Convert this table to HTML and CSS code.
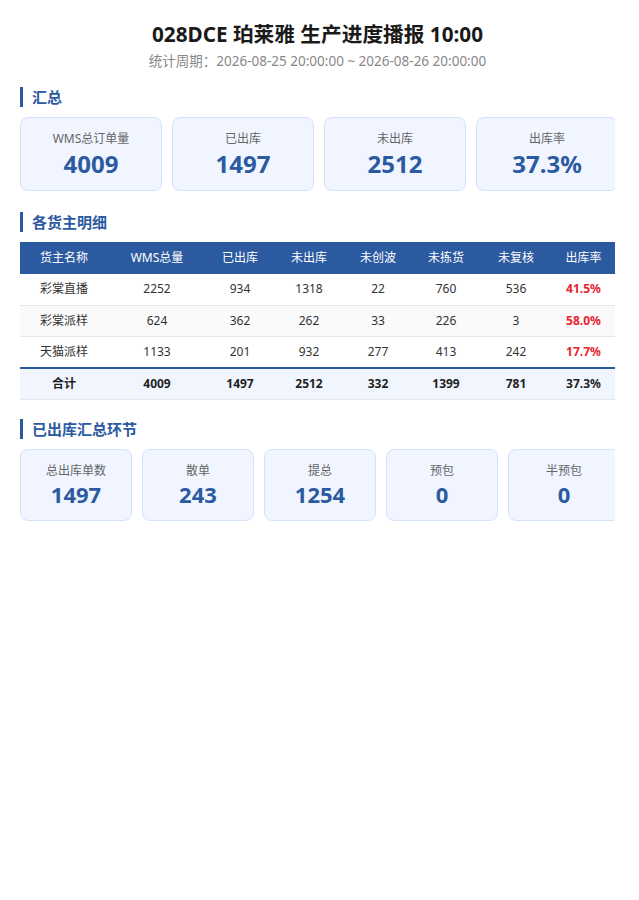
FILE: index.html
```html
<!DOCTYPE html>
<html lang="zh-CN">
<head>
<meta charset="utf-8">
<title>028DCE 珀莱雅 生产进度播报 10:00</title>
<link rel="stylesheet" href="styles.css">
</head>
<body>
<div class="page">
  <header class="head">
    <h1 class="title">028DCE 珀莱雅 生产进度播报 10:00</h1>
    <p class="period">统计周期：2026-08-25 20:00:00 ~ 2026-08-26 20:00:00</p>
  </header>

  <section class="section first">
    <h2 class="sec-title">汇总</h2>
    <div class="cards">
      <div class="card card-lg"><div class="label">WMS总订单量</div><div class="value">4009</div></div>
      <div class="card card-lg"><div class="label">已出库</div><div class="value">1497</div></div>
      <div class="card card-lg"><div class="label">未出库</div><div class="value">2512</div></div>
      <div class="card card-lg"><div class="label">出库率</div><div class="value">37.3%</div></div>
    </div>
  </section>

  <section class="section">
    <h2 class="sec-title">各货主明细</h2>
    <table class="detail">
      <colgroup>
        <col class="c1"><col class="c2"><col class="c3"><col class="c4"><col class="c5"><col class="c6"><col class="c7"><col class="c8">
      </colgroup>
      <thead>
        <tr><th>货主名称</th><th>WMS总量</th><th>已出库</th><th>未出库</th><th>未创波</th><th>未拣货</th><th>未复核</th><th>出库率</th></tr>
      </thead>
      <tbody>
        <tr><td>彩棠直播</td><td>2252</td><td>934</td><td>1318</td><td>22</td><td>760</td><td>536</td><td class="rate">41.5%</td></tr>
        <tr class="alt"><td>彩棠派样</td><td>624</td><td>362</td><td>262</td><td>33</td><td>226</td><td>3</td><td class="rate">58.0%</td></tr>
        <tr class="last"><td>天猫派样</td><td>1133</td><td>201</td><td>932</td><td>277</td><td>413</td><td>242</td><td class="rate">17.7%</td></tr>
      </tbody>
      <tfoot>
        <tr><td>合计</td><td>4009</td><td>1497</td><td>2512</td><td>332</td><td>1399</td><td>781</td><td>37.3%</td></tr>
      </tfoot>
    </table>
  </section>

  <section class="section after-table">
    <h2 class="sec-title">已出库汇总环节</h2>
    <div class="cards">
      <div class="card card-sm"><div class="label">总出库单数</div><div class="value">1497</div></div>
      <div class="card card-sm"><div class="label">散单</div><div class="value">243</div></div>
      <div class="card card-sm"><div class="label">提总</div><div class="value">1254</div></div>
      <div class="card card-sm"><div class="label">预包</div><div class="value">0</div></div>
      <div class="card card-sm"><div class="label">半预包</div><div class="value">0</div></div>
    </div>
  </section>
</div>
</body>
</html>
```

FILE: styles.css
```css
* { box-sizing: border-box; }

html, body {
  margin: 0;
  padding: 0;
  background: #ffffff;
}

body {
  font-family: "Noto Sans", "Noto Sans CJK SC", sans-serif;
  color: #333333;
}

.page {
  width: 639px;
  padding: 20px 24px 20px 20px;
}

.head {
  text-align: center;
}

.title {
  margin: 0;
  font-size: 20.7px;
  line-height: 28px;
  font-weight: 700;
  color: #1a1a1a;
}

.period {
  margin: 3px 0 0;
  font-size: 13.5px;
  line-height: 20px;
  color: #888888;
}

.section {
  margin-top: 21px;
}

.section.first {
  margin-top: 16px;
}

.section.after-table {
  margin-top: 19px;
}

.sec-title {
  margin: 0 0 10px;
  padding-left: 9px;
  border-left: 3px solid #2c5aa0;
  font-size: 15px;
  line-height: 20px;
  font-weight: 700;
  color: #2c5aa0;
}

.cards {
  display: flex;
  gap: 10px;
  overflow: hidden;
}

.card {
  flex: 0 0 auto;
  background: #f0f5ff;
  border: 1px solid #d5e2fb;
  border-radius: 8px;
  text-align: center;
}

.card-lg {
  width: 142px;
  height: 74px;
  padding-top: 12px;
}

.card-sm {
  width: 112px;
  height: 72px;
  padding-top: 12px;
}

.label {
  font-size: 12px;
  line-height: 18px;
  color: #666666;
}

.card-lg .value {
  margin-top: 2px;
  font-size: 24px;
  line-height: 28px;
  font-weight: 700;
  color: #2c5aa0;
}

.card-sm .value {
  margin-top: 1px;
  font-size: 22px;
  line-height: 26px;
  font-weight: 700;
  color: #2c5aa0;
}

.detail {
  width: 595px;
  border-collapse: collapse;
  table-layout: fixed;
  font-size: 12px;
}

.c1 { width: 88px; }
.c2 { width: 98px; }
.c3 { width: 68px; }
.c4 { width: 70px; }
.c5 { width: 68px; }
.c6 { width: 68px; }
.c7 { width: 72px; }
.c8 { width: 63px; }

.detail th {
  background: #2c5aa0;
  color: #ffffff;
  font-weight: 400;
  height: 32px;
  padding: 0;
  line-height: 32px;
  text-align: center;
}

.detail td {
  height: 31px;
  padding: 0;
  line-height: 30px;
  text-align: center;
  color: #333333;
  border-bottom: 1px solid #e6e6e6;
}

.detail tr.alt td {
  background: #fafafa;
}

.detail tr.last td {
  border-bottom: none;
}

.detail td.rate {
  color: #e8232d;
  font-weight: 700;
}

.detail tfoot td {
  background: #f0f5fe;
  border-top: 2px solid #2c5aa0;
  font-weight: 700;
  color: #1f1f1f;
  height: 30px;
}
```
